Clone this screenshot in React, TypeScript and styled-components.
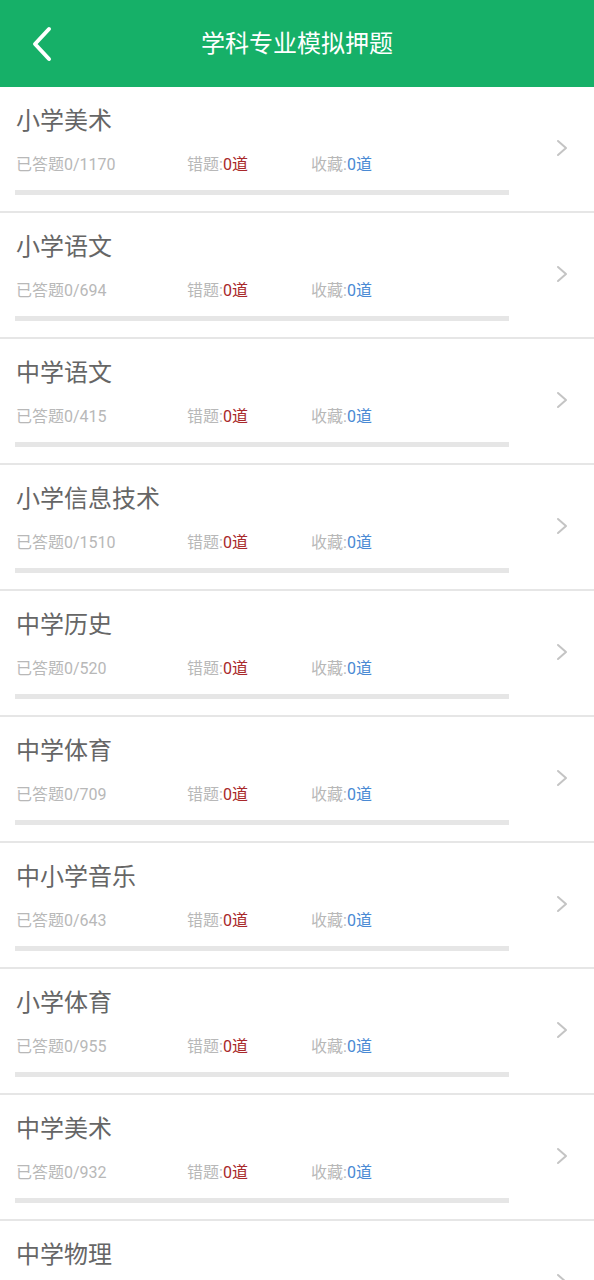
import React from "react";
import styled, { createGlobalStyle } from "styled-components";

const Global = createGlobalStyle`
  html, body { margin: 0; padding: 0; background: #ffffff; }
  body { font-family: Roboto, "Noto Sans CJK SC", sans-serif; }
`;

const Page = styled.div`
  width: 594px;
  height: 1280px;
  overflow: hidden;
  background: #ffffff;
`;

const Header = styled.header`
  height: 87px;
  background: #16b068;
  display: grid;
  grid-template-columns: 87px 1fr 87px;
  align-items: center;
`;

const BackButton = styled.div`
  display: flex;
  align-items: center;
  justify-content: flex-start;
  padding-left: 31px;
  height: 100%;
`;

const Title = styled.h1`
  margin: 0;
  text-align: center;
  color: #ffffff;
  font-family: Roboto, "Noto Sans CJK SC", sans-serif;
  font-weight: 400;
  font-size: 24px;
  line-height: 30px;
`;

const List = styled.div`
  display: flex;
  flex-direction: column;
`;

const Row = styled.div`
  display: flex;
  align-items: center;
  height: 124px;
  border-bottom: 2px solid #e6e6e6;
  padding: 0 0 0 15px;
`;

const Body = styled.div`
  width: 494px;
  display: flex;
  flex-direction: column;
`;

const Name = styled.div`
  color: #666666;
  font-size: 24px;
  line-height: 30px;
  padding-left: 1px;
  margin-top: 3px;
`;

const Stats = styled.div`
  display: flex;
  margin-top: 19px;
  font-size: 16px;
  line-height: 20px;
  color: #b8b8b8;
  padding-left: 1px;
`;

const Stat = styled.span<{ $w: number }>`
  width: ${(p) => p.$w}px;
  white-space: nowrap;
`;

const Num = styled.span<{ $c: string }>`
  color: ${(p) => p.$c};
`;

const Bar = styled.div`
  margin-top: 15px;
  height: 5px;
  background: #e6e6e6;
`;

const Arrow = styled.div`
  flex: 1;
  display: flex;
  justify-content: flex-end;
  padding-right: 26px;
  margin-top: -2px;
`;

const items: [string, number][] = [
  ["小学美术", 1170],
  ["小学语文", 694],
  ["中学语文", 415],
  ["小学信息技术", 1510],
  ["中学历史", 520],
  ["中学体育", 709],
  ["中小学音乐", 643],
  ["小学体育", 955],
  ["中学美术", 932],
  ["中学物理", 0],
];

export default function App() {
  return (
    <Page>
      <Global />
      <Header>
        <BackButton>
          <svg width="22" height="36" viewBox="0 0 22 36">
            <path d="M18 3 L4 18 L18 33" fill="none" stroke="#ffffff" strokeWidth="4" strokeLinecap="round" strokeLinejoin="round" />
          </svg>
        </BackButton>
        <Title>学科专业模拟押题</Title>
        <div />
      </Header>
      <List>
        {items.map(([name, total]) => (
          <Row key={name}>
            <Body>
              <Name>{name}</Name>
              <Stats>
                <Stat $w={171}>已答题0/{total}</Stat>
                <Stat $w={124}>
                  错题:<Num $c="#a8282a">0道</Num>
                </Stat>
                <Stat $w={100}>
                  收藏:<Num $c="#4a8ad4">0道</Num>
                </Stat>
              </Stats>
              <Bar />
            </Body>
            <Arrow>
              <svg width="12" height="18" viewBox="0 0 12 18">
                <path d="M2 2 L10 9 L2 16" fill="none" stroke="#c4c4c4" strokeWidth="2" strokeLinecap="round" strokeLinejoin="round" />
              </svg>
            </Arrow>
          </Row>
        ))}
      </List>
    </Page>
  );
}
